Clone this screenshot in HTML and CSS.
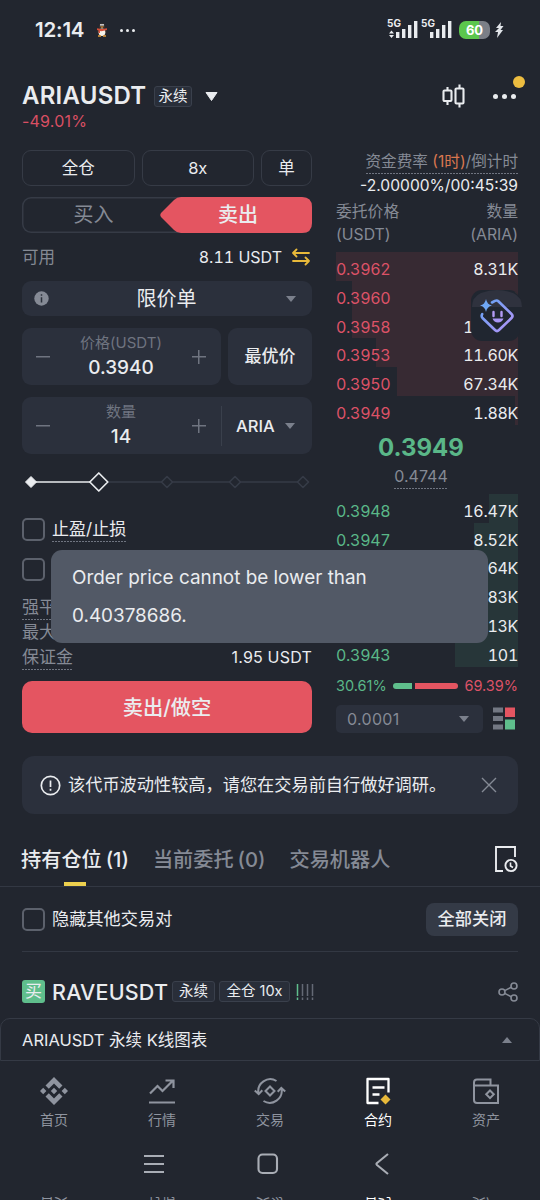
FILE: index.html
```
<!DOCTYPE html>
<html lang="zh-CN">
<head>
  <meta charset="UTF-8" />
  <meta name="viewport" content="width=device-width, initial-scale=1.0"/>
  <title>ARIAUSDT 永续</title>
  <link rel="stylesheet" href="styles.css">
</head>
<body>
  <div class="status-bar">
    <span class="clock">12:14</span>
    <svg class="penguin" width="12" height="14" viewBox="0 0 12 14">
      <ellipse cx="6" cy="3.5" rx="2.8" ry="3.2" fill="#3a3431"/>
      <ellipse cx="6" cy="8.5" rx="4.4" ry="4.6" fill="#3a3431"/>
      <ellipse cx="6" cy="9.2" rx="3.3" ry="3.8" fill="#f4f1ea"/>
      <circle cx="5" cy="1.8" r=".9" fill="#fff"/><circle cx="7" cy="1.8" r=".9" fill="#fff"/>
      <path d="M4 3.6h4l-2 1.3z" fill="#f0a03c"/>
      <path d="M1 5.2q5 1.6 10 0v1.9q-5 1.4-7 .9v2H2.6V7.5L1 7z" fill="#d8503a"/>
      <path d="M2 13h3M7 13h3" stroke="#e09a3a" stroke-width="1.3"/>
    </svg>
    <span class="status-dots"><i></i><i></i><i></i></span>
    <div class="status-right">
      <div class="signal">
        <span>5G</span>
        <svg width="30" height="18" viewBox="0 0 30 18">
          <path d="M3.5 10.5l2.5 3H1zM3.5 18l2.5-3H1z" fill="#e9ecef"/>
          <path d="M8 12h3.4v6H8zM14 9h3.4v9H14zM20 5h3.4v13H20zM26 1h3.4v17H26z" fill="#e9ecef"/>
        </svg>
      </div>
      <div class="signal">
        <span>5G</span>
        <svg width="30" height="18" viewBox="0 0 30 18">
          <path d="M8 12h3.4v6H8zM14 9h3.4v9H14zM20 5h3.4v13H20zM26 1h3.4v17H26z" fill="#e9ecef"/>
        </svg>
      </div>
      <div class="battery">60</div>
      <svg class="bolt" width="9" height="16" viewBox="0 0 9 16"><path d="M6 0L1 6h3L0 10h3l-1 6 6-8H5.500l3-4H5.500z" fill="#e2e5ea"/></svg>
    </div>
  </div>

  <header class="pair-header">
    <div class="pair-row">
      <h1>ARIAUSDT</h1>
      <span class="tag">永续</span>
      <svg class="pair-caret" width="13" height="9" viewBox="0 0 13 9"><path d="M1 .5h11L6.500 8.500z" fill="#eaecef" stroke="#eaecef" stroke-linejoin="round"/></svg>
      <svg class="candles" width="24" height="24" viewBox="0 0 24 24" fill="none" stroke="#eaecef" stroke-width="2.100">
        <rect x="1.500" y="6.500" width="8" height="10.500" rx="1"/><path d="M5.500 3v3.500M5.500 17v4"/>
        <rect x="13.500" y="4.500" width="8" height="15" rx="1"/><path d="M17.500 .5v4M17.500 19.500v4"/>
      </svg>
      <span class="more"><i></i><i></i><i></i><b></b></span>
    </div>
    <div class="change">-49.01%</div>
  </header>

  <main class="trade">
    <section class="order-form">
      <div class="modes">
        <div class="outline-btn">全仓</div>
        <div class="outline-btn">8x</div>
        <div class="outline-btn small">单</div>
      </div>

      <div class="side-switch">
        <div class="buy">买入</div>
        <div class="sell">
          <svg width="152" height="36" viewBox="0 0 152 36"><path d="M1.500 15.500L14 3Q17 0 21 0H142Q152 0 152 10V26Q152 36 142 36H21Q17 36 14 33L1.500 20.500Q-1 18 1.500 15.500z" fill="#e45561"/></svg>
          <span>卖出</span>
        </div>
      </div>

      <div class="available">
        <span class="muted">可用</span>
        <span class="amount">8.11 USDT</span>
        <svg width="20" height="18" viewBox="0 0 20 18" fill="none" stroke="#e8b93a" stroke-width="1.800" stroke-linecap="round" stroke-linejoin="round"><path d="M18 5H2M5.500 1.500L2 5l3.500 3.500M2 13h16M14.500 9.500L18 13l-3.500 3.500"/></svg>
      </div>

      <div class="field order-type">
        <svg width="15" height="15" viewBox="0 0 15 15"><circle cx="7.500" cy="7.500" r="7.200" fill="#858a95"/><path d="M7.500 3.200v1.600M7.500 6.200v5.300" stroke="#2b303b" stroke-width="1.500"/></svg>
        <span>限价单</span>
        <i class="caret"></i>
      </div>

      <div class="price-row">
        <div class="field stepper">
          <i class="minus"></i>
          <div class="value"><small>价格(USDT)</small><strong>0.3940</strong></div>
          <i class="plus"></i>
        </div>
        <div class="field best">最优价</div>
      </div>

      <div class="field qty-row">
        <div class="stepper">
          <i class="minus"></i>
          <div class="value"><small>数量</small><strong>14</strong></div>
          <i class="plus"></i>
        </div>
        <div class="unit">ARIA<i class="caret"></i></div>
      </div>

      <svg class="slider" width="290" height="22" viewBox="0 0 290 22" fill="none">
        <path d="M86 11h54M150 11h58M218 11h58" stroke="#363b47" stroke-width="1.300"/>
        <path d="M9 11h59" stroke="#eaecef" stroke-width="1.600"/>
        <path d="M9 5.500L14.500 11 9 16.500 3.500 11z" fill="#eaecef" stroke="#eaecef" stroke-linejoin="round"/>
        <path d="M76.800 2L85.800 11l-9 9-9-9z" stroke="#eaecef" stroke-width="1.700" stroke-linejoin="round"/>
        <path d="M145 5.500l5.500 5.500-5.500 5.500-5.500-5.500zM213 5.500l5.500 5.500-5.500 5.500-5.500-5.500zM281 5.500l5.500 5.500-5.500 5.500-5.500-5.500z" stroke="#363b47" stroke-width="1.600" stroke-linejoin="round"/>
      </svg>

      <div class="check-row"><i class="checkbox"></i><span class="dotted">止盈/止损</span></div>
      <div class="check-row"><i class="checkbox"></i><span class="dotted">只减仓</span></div>

      <div class="summary">
        <div><span class="dotted">强平价格</span></div>
        <div><span>最大</span></div>
        <div><span class="dotted">保证金</span><b>1.95 USDT</b></div>
      </div>

      <div class="submit">卖出/做空</div>
    </section>

    <section class="order-book">
      <div class="funding">
        <span class="dotted">资金费率 <em>(1时)</em>/倒计时</span>
        <b>-2.00000%/00:45:39</b>
      </div>
      <div class="book-head">
        <span>委托价格<br>(USDT)</span>
        <span>数量<br>(ARIA)</span>
      </div>
      <div class="asks">
        <div class="level"><i style="width: 100%"></i><span>0.3962</span><b>8.31K</b></div>
        <div class="level"><i style="width: 91%"></i><span>0.3960</span><b>920</b></div>
        <div class="level"><i style="width: 91%"></i><span>0.3958</span><b>12.05K</b></div>
        <div class="level"><i style="width: 78%"></i><span>0.3953</span><b>11.60K</b></div>
        <div class="level"><i style="width: 66.500%"></i><span>0.3950</span><b>67.34K</b></div>
        <div class="level"><i style="width: 1.500%"></i><span>0.3949</span><b>1.88K</b></div>
      </div>
      <div class="last-price">0.3949</div>
      <div class="mark-price"><span class="dotted">0.4744</span></div>
      <div class="bids">
        <div class="level"><i style="width: 16%"></i><span>0.3948</span><b>16.47K</b></div>
        <div class="level"><i style="width: 24%"></i><span>0.3947</span><b>8.52K</b></div>
        <div class="level"><i style="width: 28%"></i><span>0.3946</span><b>4.64K</b></div>
        <div class="level"><i style="width: 30%"></i><span>0.3945</span><b>2.83K</b></div>
        <div class="level"><i style="width: 34%"></i><span>0.3944</span><b>1.13K</b></div>
        <div class="level"><i style="width: 34.500%"></i><span>0.3943</span><b>101</b></div>
      </div>
      <div class="ratio">
        <span class="up">30.61%</span>
        <i class="bar-up" style="flex-grow: 30.61"></i>
        <i class="bar-down" style="flex-grow: 69.39"></i>
        <span class="down">69.39%</span>
      </div>
      <div class="precision">
        <div class="field">0.0001<i class="caret"></i></div>
        <svg width="23" height="23" viewBox="0 0 23 23"><path d="M0 .5h10v5H0zM0 9h10v5H0zM0 17.500h10v5H0z" fill="#737883"/><path d="M12 .5h10v9.500H12z" fill="#e45561"/><path d="M12 12.500h10v10H12z" fill="#5fbe8c"/></svg>
      </div>
    </section>
  </main>

  <div class="notice">
    <svg width="21" height="21" viewBox="0 0 21 21" fill="none" stroke="#eaecef" stroke-width="1.700"><circle cx="10.500" cy="10.500" r="9.200"/><path d="M10.500 5.500v6.500M10.500 13.700v2"/></svg>
    <span>该代币波动性较高，请您在交易前自行做好调研。</span>
    <svg width="16" height="16" viewBox="0 0 16 16" stroke="#858a95" stroke-width="1.400"><path d="M1 1l14 14M15 1L1 15"/></svg>
  </div>

  <nav class="tabs">
    <div class="tab active">持有仓位 (1)</div>
    <div class="tab">当前委托 (0)</div>
    <div class="tab">交易机器人</div>
    <svg width="24" height="28" viewBox="0 0 24 28" fill="none" stroke="#eaecef" stroke-width="1.900"><path d="M9 26H2V2h19v10"/><circle cx="17" cy="20.500" r="5.600"/><path d="M16.500 17.500v3.500l2.500 1.500" stroke-width="1.600"/></svg>
  </nav>

  <div class="filter">
    <i class="checkbox"></i>
    <span>隐藏其他交易对</span>
    <div class="close-all">全部关闭</div>
  </div>

  <div class="position">
    <span class="badge-buy">买</span>
    <strong>RAVEUSDT</strong>
    <span class="tag">永续</span>
    <span class="tag wide">全仓 10x</span>
    <svg class="risk" width="18" height="16" viewBox="0 0 18 16" stroke-width="1.500" stroke="#646975"><path d="M1.500 0v12M1.500 13.500V16" stroke="#5fbe8c"/><path d="M6.500 0v12M6.500 13.500V16M11.500 0v12M11.500 13.500V16M16.500 0v12M16.500 13.500V16"/></svg>
    <svg class="share" width="20" height="20" viewBox="0 0 20 20" fill="none" stroke="#858a95" stroke-width="1.600"><circle cx="4" cy="10" r="3"/><circle cx="16" cy="4" r="3"/><circle cx="16" cy="16" r="3"/><path d="M6.700 8.600l6.600-3.300M6.700 11.400l6.600 3.300"/></svg>
  </div>

  <div class="chart-drawer">
    <span>ARIAUSDT 永续 K线图表</span>
    <i class="caret up-caret"></i>
  </div>

  <footer class="tab-bar">
    <div class="nav-item">
      <svg width="28" height="28" viewBox="0 0 28 28" fill="#8f949f"><path d="M14 0l8.500 8.500-3.300 3.300L14 6.600l-5.200 5.200-3.300-3.300zM14 28l8.500-8.500-3.300-3.300L14 21.400l-5.200-5.200-3.300 3.300zM14 10.800l3.200 3.200-3.200 3.200-3.200-3.200zM3.200 10.800L6.400 14l-3.200 3.200L0 14zM24.800 10.800L28 14l-3.200 3.200-3.200-3.200z"/></svg>
      <span>首页</span>
    </div>
    <div class="nav-item">
      <svg width="28" height="28" viewBox="0 0 28 28" fill="none" stroke="#8f949f" stroke-width="2.200"><path d="M2 16.500l7.500-7.500 5 5L25 3.500M17.500 3.500H25.500V11M1 25.500h26"/></svg>
      <span>行情</span>
    </div>
    <div class="nav-item">
      <svg width="32" height="28" viewBox="0 0 32 28" fill="none" stroke="#8f949f" stroke-width="2"><path d="M22.500 4A12 12 0 0 0 4.500 16.500M.8 13.500l3.900 3.700 3.600-3.900M9.500 24A12 12 0 0 0 27.500 11.500M23.700 14.700l3.600-3.900 3.900 3.700M16 9.500l4.500 4.500-4.500 4.500-4.500-4.500z"/></svg>
      <span>交易</span>
    </div>
    <div class="nav-item active">
      <svg width="28" height="28" viewBox="0 0 28 28" fill="none" stroke="#fff" stroke-width="2.300" stroke-linejoin="round"><path d="M14.500 26H3.500V2h21v13.500M8.500 10.500h12M8.500 17.500h7"/><path d="M21.500 17.500l5 5-5 5-5-5z" fill="#e8b93a" stroke="none"/></svg>
      <span>合约</span>
    </div>
    <div class="nav-item">
      <svg width="28" height="28" viewBox="0 0 28 28" fill="none" stroke="#8f949f" stroke-width="2"><path d="M2 6v17q0 3 3 3h21V8.500H2V5.500Q2 2.500 5 2.500h13.500v6"/><path d="M18 13.500l3.800 3.800-3.800 3.800-3.800-3.800z"/></svg>
      <span>资产</span>
    </div>
  </footer>

  <div class="system-nav">
    <svg width="20" height="20" viewBox="0 0 20 20" stroke="#a9adb5" stroke-width="2.200"><path d="M0 2h20M0 10h20M0 18h20"/></svg>
    <svg class="home" width="22" height="22" viewBox="0 0 22 22" fill="none" stroke="#a9adb5" stroke-width="2.100"><rect x="1.500" y="1.500" width="18.500" height="18.500" rx="4"/></svg>
    <svg width="14" height="22" viewBox="0 0 14 22" fill="none" stroke="#a9adb5" stroke-width="2.100" stroke-linejoin="round"><path d="M13 1L2 10q-1 1 0 2l11 9"/></svg>
  </div>

  <div class="reflection">
    <span>首页</span><span>行情</span><span>交易</span><span class="active">合约</span><span>资产</span>
  </div>

  <div class="assistant">
    <svg width="52" height="52" viewBox="0 0 52 52" fill="none">
      <defs><linearGradient id="glow" x1="0" y1="0" x2="1" y2="1"><stop offset="0" stop-color="#62a4f5"/><stop offset="1" stop-color="#b593f7"/></linearGradient></defs>
      <rect width="49" height="51" rx="11" fill="#202630"/>
      <path d="M1 17Q1 7 10 3Q26-3 42 3Q51 7 51 17z" fill="#2f323e"/>
      <path d="M21 12.500l3-1.600q2-1 3.600.6L40.500 24q2 2 0 4L28 40q-2 2-4 0L11.500 28q-1.500-1.800-.3-3.800" stroke="url(#glow)" stroke-width="2.600" stroke-linecap="round"/>
      <path d="M15 9q1 5.500 6 6.500-5 1-6 6.500-1-5.500-6-6.500 5-1 6-6.500z" fill="#6fa8f5"/>
      <path d="M22.500 22v4M30.500 22v4" stroke="#b39bf5" stroke-width="2.400" stroke-linecap="round"/>
      <path d="M21.500 28.500h11q-1.500 4-5.500 4t-5.500-4z" fill="#a996f5"/>
    </svg>
  </div>

  <div class="toast">Order price cannot be lower than 0.40378686.</div>
</body>
</html>
```

FILE: styles.css
```
* {
  box-sizing: border-box;
}

body {
  position: relative;
  width: 540px;
  height: 1200px;
  margin: 0;
  overflow: hidden;
  background-color: #22262f;
  color: #eaecef;
  font-family: Inter, "Noto Sans CJK SC", sans-serif;
  font-size: 16px;
  line-height: 24px;
}

svg {
  display: block;
  flex: none;
}

i, em {
  font-style: normal;
}

/* status bar */
.status-bar {
  display: flex;
  align-items: center;
  height: 60px;
  padding: 0 36px 0 35px;
}

.clock {
  width: 50px;
  font-size: 20.5px;
  font-weight: 600;
  letter-spacing: -0.2px;
}

.penguin {
  margin-left: 11px;
}

.status-dots {
  display: flex;
  gap: 3px;
  margin-left: 12px;
}

.status-dots i {
  width: 3px;
  height: 3px;
  border-radius: 50%;
  background-color: #eaecef;
}

.status-right {
  display: flex;
  align-items: center;
  margin-left: auto;
}

.signal {
  display: flex;
  width: 34px;
  position: relative;
  height: 20px;
  padding-bottom: 2px;
  align-items: flex-end;
}

.signal span {
  position: absolute;
  left: -1px;
  top: -2px;
  font-size: 10px;
  font-weight: 700;
  line-height: 10px;
}

.battery {
  width: 31px;
  height: 18px;
  margin-left: 3px;
  border-radius: 7px;
  background: linear-gradient(90deg, #5cc64d 64%, #7b7f87 64%);
  color: #fff;
  font-size: 13px;
  font-weight: 700;
  line-height: 18px;
  text-align: center;
}

.bolt {
  margin-left: 5px;
}

/* header */
.pair-header {
  height: 90px;
  padding: 22px 22px 0;
}

.pair-row {
  display: flex;
  align-items: center;
  height: 28px;
}

h1 {
  width: 125px;
  margin: 0;
  font-size: 24px;
  font-weight: 600;
  letter-spacing: 0.25px;
  line-height: 28px;
}

.tag {
  flex: none;
  height: 21px;
  border: 1px solid #3a404c;
  border-radius: 3px;
  background-color: #292e39;
  font-size: 14.5px;
  line-height: 18px;
  text-align: center;
}

.pair-header .tag {
  width: 38px;
  margin-left: 7px;
}

.pair-caret {
  margin-left: 13px;
}

.candles {
  margin-left: auto;
}

.more {
  position: relative;
  display: flex;
  gap: 4px;
  margin: 0 2px 0 27px;
}

.more i {
  width: 5px;
  height: 5px;
  border-radius: 50%;
  background-color: #eaecef;
}

.more b {
  position: absolute;
  right: -9px;
  top: -18px;
  width: 12px;
  height: 12px;
  border-radius: 50%;
  background-color: #edbd40;
}

.change {
  color: #d94f63;
  font-size: 16px;
  letter-spacing: 0.2px;
  line-height: 22px;
}

/* order form */
.trade {
  display: flex;
  justify-content: space-between;
  height: 606px;
  padding: 0 22px;
}

.order-form {
  width: 290px;
}

.modes {
  display: flex;
  gap: 7px;
}

.outline-btn {
  flex: 1;
  height: 36px;
  border: 1.5px solid #363b46;
  border-radius: 9px;
  font-size: 16.5px;
  line-height: 34px;
  text-align: center;
}

.outline-btn.small {
  flex: none;
  width: 51px;
}

.side-switch {
  display: flex;
  height: 36px;
  margin-top: 11px;
  border-radius: 9px;
  box-shadow: inset 0 0 0 1.5px #363b46;
  font-size: 20px;
  line-height: 36px;
  text-align: center;
}

.buy {
  flex: 1;
  padding-left: 5px;
  color: #858a95;
}

.sell {
  display: grid;
  width: 152px;
}

.sell svg,
.sell span {
  grid-area: 1 / 1;
}

.sell span {
  padding-left: 4px;
  font-weight: 500;
}

.muted {
  color: #858a95;
}

.available {
  display: flex;
  align-items: center;
  height: 48px;
  padding-right: 1px;
}

.available .muted {
  font-size: 16.5px;
}

.available .amount {
  margin-left: auto;
  margin-right: 9px;
  font-variant-numeric: tabular-nums;
}

.field {
  border-radius: 9px;
  background-color: #2b303c;
}

.caret {
  width: 0;
  height: 0;
  border: 5px solid transparent;
  border-top: 6px solid #7b808c;
  border-bottom: 0;
}

.order-type {
  display: flex;
  align-items: center;
  justify-content: space-between;
  height: 35px;
  padding: 0 16px 0 12px;
  font-size: 20px;
}

.order-type span {
  margin-right: 2px;
}

.price-row {
  display: flex;
  gap: 7px;
  margin: 12px 0;
}

.price-row .stepper {
  width: 199px;
}

.stepper {
  display: flex;
  align-items: center;
  justify-content: space-between;
  width: 199px;
  height: 57px;
  padding: 0 15px 0 14px;
}

.value {
  text-align: center;
}

.value small,
.value strong {
  display: block;
}

.value small {
  color: #6f7480;
  font-size: 15px;
  line-height: 22px;
}

.value strong {
  font-size: 19px;
  font-weight: 500;
  line-height: 27px;
}

.minus,
.plus {
  width: 14px;
  height: 14px;
  background: linear-gradient(#6f7480, #6f7480) center / 14px 1.5px no-repeat;
}

.plus {
  background: linear-gradient(#6f7480, #6f7480) center / 14px 1.5px no-repeat, linear-gradient(#6f7480, #6f7480) center / 1.5px 14px no-repeat;
}

.best {
  flex: 1;
  font-size: 17px;
  font-weight: 500;
  line-height: 57px;
  text-align: center;
}

.qty-row {
  display: flex;
  align-items: center;
}

.unit {
  display: flex;
  flex: 1;
  align-items: center;
  justify-content: space-between;
  height: 40px;
  padding: 0 17px 0 14px;
  border-left: 1px solid #3a404c;
  font-weight: 500;
  font-size: 16.5px;
}

.slider {
  margin-top: 17px;
}

.check-row {
  display: flex;
  align-items: center;
  height: 40px;
}

.slider + .check-row {
  margin-top: 16px;
}

.checkbox {
  flex: none;
  width: 23px;
  height: 23px;
  margin-right: 7px;
  border: 2px solid #5c616c;
  border-radius: 5px;
}

.check-row span {
  font-size: 17px;
}

.dotted {
  padding-bottom: 1px;
  background: repeating-linear-gradient(90deg, #6f7480 0 2px, transparent 2px 3px) bottom / 100% 1px no-repeat;
}

.summary {
  margin-top: 6px;
  color: #858a95;
  font-size: 17px;
}

.summary div {
  display: flex;
  justify-content: space-between;
  height: 25px;
}

.summary b {
  color: #eaecef;
  font-size: 16px;
  font-weight: 400;
  letter-spacing: 0.2px;
  line-height: 25px;
}

.submit {
  height: 52px;
  margin-top: 11px;
  border-radius: 10px;
  background-color: #e45561;
  font-size: 20.3px;
  font-weight: 500;
  line-height: 53px;
  text-align: center;
}

/* order book */
.order-book {
  width: 182px;
}

.funding {
  display: flex;
  flex-direction: column;
  align-items: flex-end;
  color: #858a95;
  font-size: 15.6px;
  line-height: 23px;
  white-space: nowrap;
}

.funding em {
  color: #d9774f;
}

.funding b {
  height: 22px;
  color: #eaecef;
  font-size: 15.6px;
  font-weight: 400;
}

.book-head {
  display: flex;
  justify-content: space-between;
  height: 56px;
  padding-top: 4px;
  color: #858a95;
  font-size: 15.8px;
  line-height: 23px;
}

.book-head span:last-child {
  text-align: right;
}

.level {
  position: relative;
  display: flex;
  justify-content: space-between;
  height: 28.8px;
  font-variant-numeric: tabular-nums;
  letter-spacing: -0.3px;
  line-height: 34px;
}

.level i {
  position: absolute;
  top: 0;
  right: 0;
  height: 100%;
}

.level span,
.level b {
  position: relative;
  font-weight: 400;
}

.asks i {
  background-color: #372a33;
}

.bids i {
  background-color: #273639;
}

.asks span,
.down {
  color: #dc5267;
}

.bids span,
.up {
  color: #5ab788;
}

.last-price {
  margin-left: -12px;
  padding-top: 7px;
  color: #5ab788;
  font-size: 24px;
  font-weight: 700;
  line-height: 32px;
  text-align: center;
}

.mark-price {
  display: flex;
  justify-content: center;
  height: 30px;
  margin-left: -12px;
  color: #858a95;
  line-height: 24px;
}

.mark-price span {
  height: 25px;
}

.ratio {
  display: flex;
  align-items: center;
  height: 38px;
  font-size: 14.5px;
}

.ratio i {
  flex-basis: 0;
  height: 6px;
}

.bar-up {
  margin-left: 6px;
  margin-right: 3px;
  border-radius: 3px 0 0 3px;
  background-color: #5fbe8c;
}

.bar-down {
  margin-right: 6px;
  border-radius: 0 3px 3px 0;
  background-color: #e45561;
}

.precision {
  display: flex;
  align-items: center;
  justify-content: space-between;
}

.precision .field {
  display: flex;
  align-items: center;
  justify-content: space-between;
  width: 147px;
  height: 28px;
  padding: 0 14px 0 11px;
  border-radius: 5px;
  color: #858a95;
  letter-spacing: 0.3px;
}

.precision svg {
  margin-right: 2px;
}

/* positions */
.notice {
  display: flex;
  align-items: center;
  height: 58px;
  margin: 0 22px;
  padding: 0 21px 0 18px;
  border-radius: 12px;
  background-color: #2b303c;
}

.notice span {
  flex: 1;
  margin-left: 7px;
  font-size: 17.2px;
  white-space: nowrap;
}

.tabs {
  display: flex;
  align-items: center;
  height: 73px;
  padding: 17px 22px 0 21px;
  border-bottom: 1px solid #333843;
}

.tab {
  position: relative;
  height: 55px;
  margin-right: 24px;
  color: #858a95;
  font-size: 20.2px;
  font-weight: 500;
  line-height: 57px;
  word-spacing: -1.5px;
}

.tab.active {
  color: #eaecef;
}

.tab.active::after {
  content: "";
  position: absolute;
  left: 50%;
  bottom: 0;
  width: 22px;
  height: 4px;
  margin-left: -11px;
  background-color: #edd04e;
}

.tabs svg {
  margin-left: auto;
}

.filter {
  display: flex;
  align-items: center;
  height: 65px;
  margin: 0 22px;
  border-bottom: 1px solid #333843;
  font-size: 17.2px;
}

.close-all {
  width: 92px;
  height: 33px;
  margin-left: auto;
  border-radius: 8px;
  background-color: #343a46;
  font-weight: 500;
  line-height: 32px;
  text-align: center;
}

.position {
  display: flex;
  align-items: center;
  height: 65px;
  padding: 14px 22px 0;
}

.badge-buy {
  width: 23px;
  height: 23px;
  border-radius: 3px;
  background-color: #5fbe8c;
  font-size: 17px;
  line-height: 22px;
  text-align: center;
}

.position strong {
  width: 116px;
  margin-left: 7px;
  font-size: 21.5px;
  font-weight: 500;
  letter-spacing: 0.2px;
}

.position .tag {
  width: 43px;
  margin-left: 4px;
}

.position .tag.wide {
  width: 71px;
}

.risk {
  margin-left: 6px;
}

.share {
  margin-left: auto;
}

.chart-drawer {
  display: flex;
  align-items: center;
  justify-content: space-between;
  height: 43px;
  margin-top: 1px;
  padding: 0 27px 0 21px;
  border: 1px solid #353a45;
  border-radius: 10px 10px 0 0;
  font-size: 16.5px;
}

.up-caret {
  border-top: 0;
  border-bottom: 6px solid #7b808c;
}

/* bottom bars */
.tab-bar {
  display: flex;
  height: 75px;
  padding-top: 16px;
}

.nav-item {
  display: flex;
  flex: 1;
  flex-direction: column;
  align-items: center;
  color: #8f949f;
  font-size: 14px;
}

.nav-item span {
  margin-top: 3px;
}

.nav-item.active {
  color: #fff;
}

.system-nav {
  display: flex;
  align-items: center;
  height: 56px;
  padding: 0 151px 0 144px;
  justify-content: space-between;
}

.home {
  margin-right: 3px;
}

.reflection {
  display: flex;
  height: 24px;
  transform: scaleY(-1);
  color: #8f949f;
  font-size: 14px;
  line-height: 24px;
  text-align: center;
}

.reflection span {
  flex: 1;
}

.reflection .active {
  color: #fff;
}

/* overlays */
.assistant {
  position: absolute;
  left: 471px;
  top: 290px;
}

.toast {
  position: absolute;
  left: 51px;
  top: 550px;
  width: 437px;
  height: 93px;
  padding: 9px 80px 0 21px;
  border-radius: 11px;
  background-color: #525966;
  color: #eaecef;
  font-size: 18.900px;
  line-height: 38px;
}
```
